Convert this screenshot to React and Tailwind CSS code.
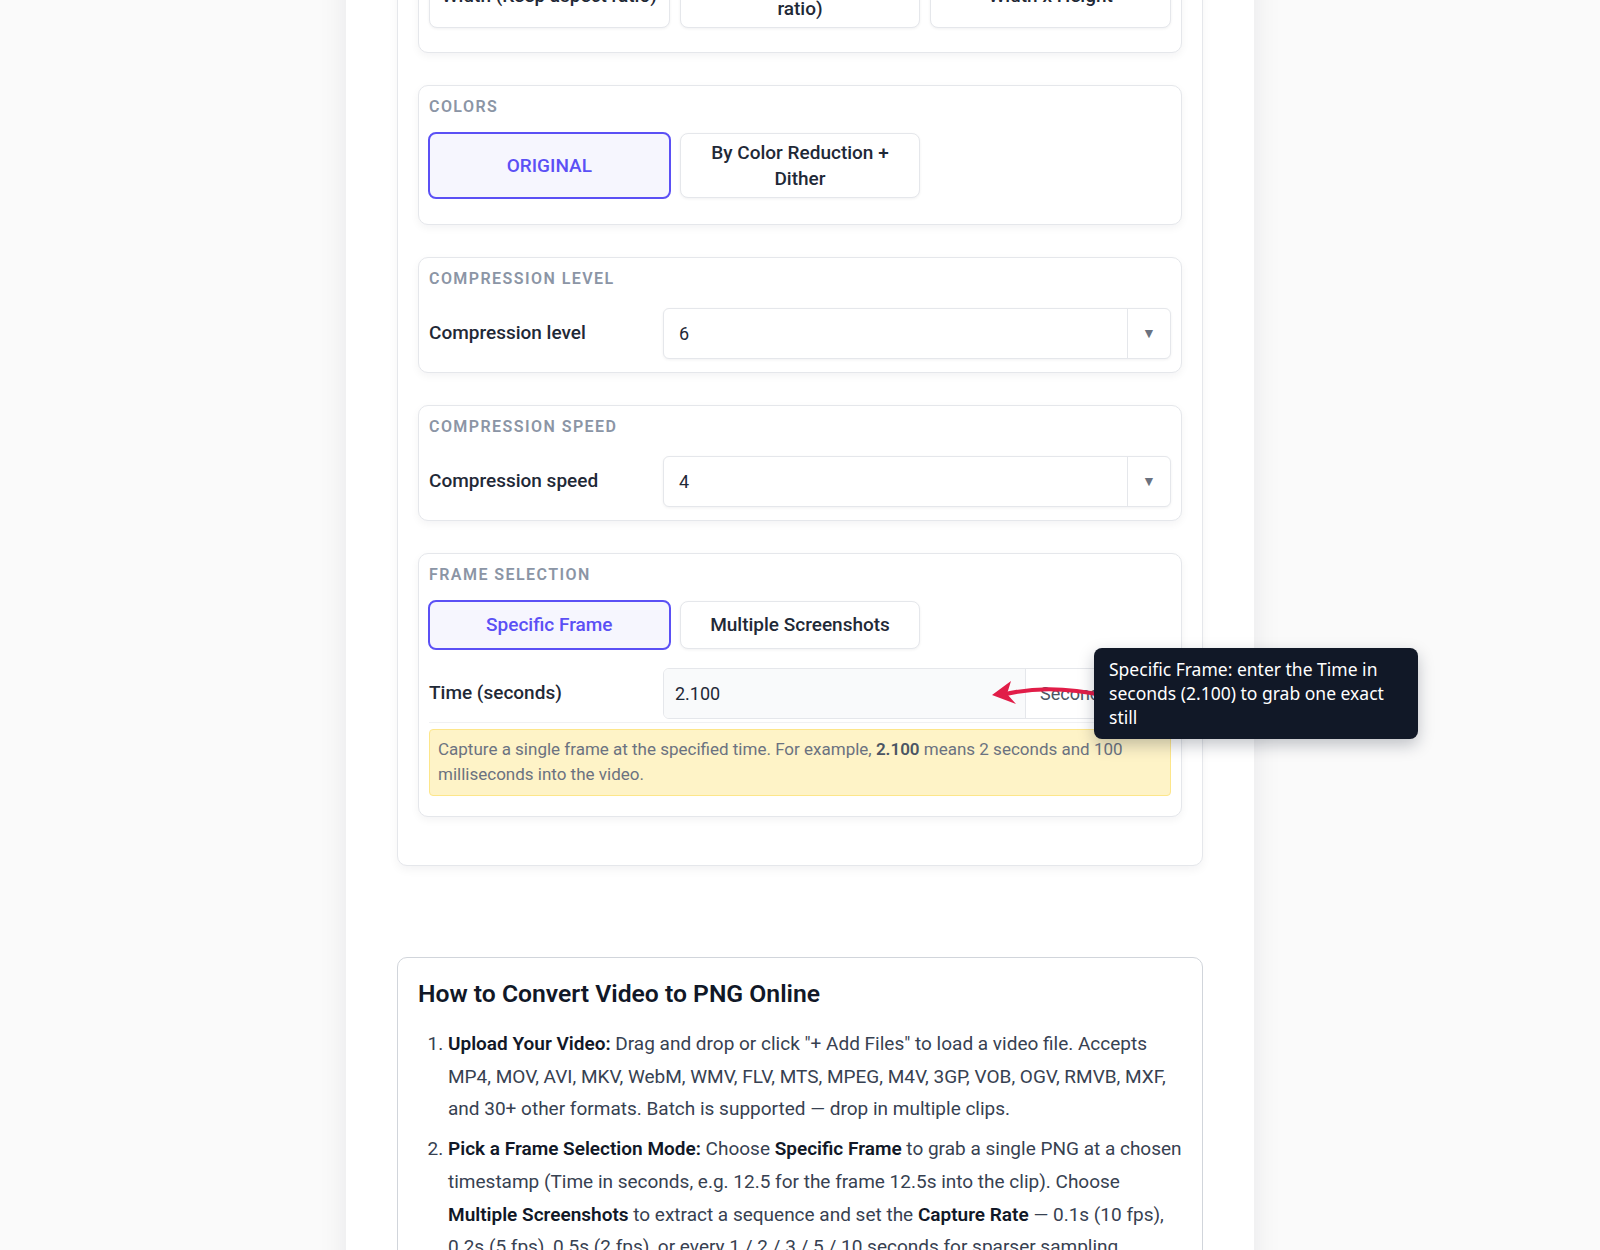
import React from 'react';

const font = { fontFamily: 'Roboto, "Liberation Sans", sans-serif' };

function Section({ title, children, className = '' }) {
    return (
        <div className={`border border-[#e5e7eb] rounded-[10px] bg-white shadow-[0_3px_8px_rgba(15,23,42,0.05)] px-[10px] pt-[11px] pb-[10px] ${className}`}>
            <div className="text-[16px] leading-[20px] font-semibold uppercase tracking-[0.09em] text-[#8b95a5] mb-[16px]">{title}</div>
            {children}
        </div>
    );
}

function Option({ label, active }) {
    if (active) {
        return (
            <button className="-m-px min-h-[50px] px-[10px] py-[6px] rounded-[8px] border-2 border-[#5b50f5] bg-[#f6f6fe] text-[#5b50f5] text-[19px] leading-[25.5px] font-medium flex items-center justify-center text-center">
                {label}
            </button>
        );
    }
    return (
        <button className="min-h-[48px] px-[10px] py-[6px] rounded-[8px] border border-[#e5e7eb] bg-white text-[#1f2937] text-[19px] leading-[25.5px] font-medium shadow-[0_1px_3px_rgba(15,23,42,0.06)] flex items-center justify-center text-center">
            {label}
        </button>
    );
}

function Options({ items, active, className = '' }) {
    return (
        <div className={`grid grid-cols-3 gap-[10px] ${className}`}>
            {items.map(item => (
                <Option key={item} label={item} active={item === active} />
            ))}
        </div>
    );
}

function SelectRow({ label, value }) {
    return (
        <div className="flex items-center py-[3px]">
            <div className="w-[234px] text-[19px] font-medium text-[#1f2937]">{label}</div>
            <div className="flex-1 flex h-[51px] border border-[#e5e7eb] rounded-[6px] bg-white shadow-[0_1px_3px_rgba(15,23,42,0.06)]">
                <div className="flex-1 flex items-center pl-[15px] text-[18px] text-[#1f2937]">{value}</div>
                <div className="w-[43px] border-l border-[#e5e7eb] flex items-center justify-center text-[14px] text-[#6b7280]">▼</div>
            </div>
        </div>
    );
}

export default function App() {
    return (
        <div className="h-[1250px] overflow-hidden bg-[#fafafa]" style={font}>
            <div className="w-[908px] mx-auto bg-white min-h-[1400px] px-[51px] shadow-[0_0_28px_rgba(15,23,42,0.08)] -mt-[106px]">
                {/* Settings card */}
                <div className="border border-[#e5e7eb] rounded-[10px] bg-white shadow-[0_4px_10px_rgba(15,23,42,0.05)] px-[20px] pt-[20px] pb-[48px] flex flex-col gap-[32px]">
                    <Section title="Resize">
                        <Options
                            className="mb-[14px]"
                            items={['Width (Keep aspect ratio)', 'Height (Keep aspect ratio)', 'Width x Height']}
                        />
                    </Section>

                    <Section title="Colors">
                        <Options className="mb-[16px]" items={['ORIGINAL', 'By Color Reduction + Dither']} active="ORIGINAL" />
                    </Section>

                    <Section title="Compression level">
                        <SelectRow label="Compression level" value="6" />
                    </Section>

                    <Section title="Compression speed">
                        <SelectRow label="Compression speed" value="4" />
                    </Section>

                    <Section title="Frame selection">
                        <Options items={['Specific Frame', 'Multiple Screenshots']} active="Specific Frame" />

                        <div className="relative flex items-center pt-[19px] pb-[3px] border-b border-[#f0f1f3]">
                            <div className="w-[234px] text-[19px] font-medium text-[#1f2937]">Time (seconds)</div>
                            <div className="flex-1 flex h-[51px] border border-[#e5e7eb] rounded-[6px] overflow-hidden">
                                <div className="flex-1 flex items-center pl-[11px] bg-[#f9fafb] text-[18px] text-[#1f2937]">2.100</div>
                                <div className="w-[145px] border-l border-[#e5e7eb] bg-white flex items-center pl-[14px] text-[18px] text-[#4b5563]">Seconds</div>
                            </div>

                            {/* pointer from the tip to the field */}
                            <svg className="absolute left-[553px] top-[28px]" width="130" height="32" viewBox="0 0 130 32" fill="none">
                                <path d="M124 19 Q66 6 20 18" stroke="#e11d48" strokeWidth="4" strokeLinecap="round" />
                                <polygon points="10,18 29,4 25,17 34,27" fill="#e11d48" />
                            </svg>

                            <div
                                className="absolute left-[665px] top-[-1px] w-[324px] rounded-[8px] bg-[#111827] px-[15px] pt-[9px] pb-[10px] text-[17.5px] leading-[24px] text-white shadow-[0_6px_16px_rgba(15,23,42,0.25)]"
                                style={{ fontFamily: '"Noto Sans", "Open Sans", sans-serif' }}
                            >
                                Specific Frame: enter the Time in seconds (2.100) to grab one exact still
                            </div>
                        </div>

                        <div className="mt-[6px] mb-[10px] rounded-[4px] border border-[#fde68a] bg-[#fef3c7] px-[8px] pt-[7px] pb-[9px] text-[17px] leading-[24.5px] text-[#6b7280]">
                            Capture a single frame at the specified time. For example, <span className="font-semibold text-[#4b5563]">2.100</span> means 2 seconds and 100 milliseconds into the video.
                        </div>
                    </Section>
                </div>

                {/* How-to card */}
                <div className="mt-[91px] border border-[#d1d5db] rounded-[10px] bg-white px-[20px] pt-[21px] pb-[24px]">
                    <h2 className="text-[24.7px] leading-[30px] font-semibold text-[#111827] mb-[19px]">How to Convert Video to PNG Online</h2>
                    <ol className="list-decimal pl-[30px] text-[19px] leading-[32.6px] text-[#374151]">
                        <li className="mb-[7.6px]">
                            <span className="font-semibold text-[#111827]">Upload Your Video:</span> Drag and drop or click "+ Add Files" to load a video file. Accepts MP4, MOV, AVI, MKV, WebM, WMV, FLV, MTS, MPEG, M4V, 3GP, VOB, OGV, RMVB, MXF, and 30+ other formats. Batch is supported — drop in multiple clips.
                        </li>
                        <li className="mb-[7.6px]">
                            <span className="font-semibold text-[#111827]">Pick a Frame Selection Mode:</span> Choose <span className="font-semibold text-[#111827]">Specific Frame</span> to grab a single PNG at a chosen timestamp (Time in seconds, e.g. 12.5 for the frame 12.5s into the clip). Choose <span className="font-semibold text-[#111827]">Multiple Screenshots</span> to extract a sequence and set the <span className="font-semibold text-[#111827]">Capture Rate</span> — 0.1s (10 fps), 0.2s (5 fps), 0.5s (2 fps), or every 1 / 2 / 3 / 5 / 10 seconds for sparser sampling.
                        </li>
                        <li className="mb-[7.6px]">
                            <span className="font-semibold text-[#111827]">Adjust PNG Options:</span> Resize the output, keep the original colors or reduce them with dithering, and tune the compression level and speed.
                        </li>
                    </ol>
                </div>
            </div>
        </div>
    );
}
